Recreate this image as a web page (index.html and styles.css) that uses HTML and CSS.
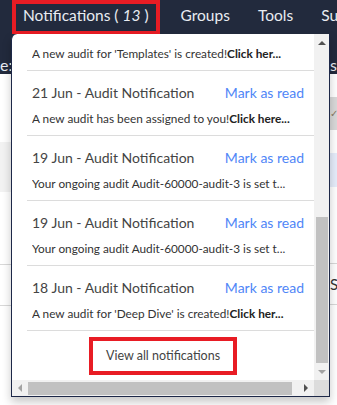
FILE: index.html
```html
<!DOCTYPE html>
<html lang="en">
<head>
    <meta charset="UTF-8">
    <meta name="viewport" content="width=device-width, initial-scale=1.0">
    <title>Notifications</title>
    <link rel="stylesheet" href="styles.css">
</head>
<body>
    <header class="topbar">
        <nav class="nav-main">
            <a class="nav-item is-active" href="#">Notifications ( <i>13</i> )</a>
            <a class="nav-item" href="#">Groups</a>
            <a class="nav-item" href="#">Tools</a>
            <a class="nav-item" href="#">Support</a>
        </nav>
        <div class="nav-sub">
            <span>e:</span>
            <span>s</span>
        </div>
    </header>

    <main class="page">
        <section class="page-left">
            <div class="band"></div>
            <div class="line-row"></div>
        </section>
        <section class="page-right">
            <div class="table-head"><span class="sort-mark">&#10003;</span></div>
            <div class="table-sel"></div>
            <div class="line-row">S</div>
        </section>
    </main>

    <div class="notif-dropdown">
        <div class="notif-body">
            <ul class="notif-list">
                <li class="notif-item">
                    <div class="notif-head">
                        <span class="notif-title">22 Jun - Audit Notification</span>
                        <a class="notif-mark" href="#">Mark as read</a>
                    </div>
                    <div class="notif-text">A new audit for 'Templates' is created!<b>Click her...</b></div>
                </li>
                <li class="notif-item">
                    <div class="notif-head">
                        <span class="notif-title">21 Jun - Audit Notification</span>
                        <a class="notif-mark" href="#">Mark as read</a>
                    </div>
                    <div class="notif-text">A new audit has been assigned to you!<b>Click here...</b></div>
                </li>
                <li class="notif-item">
                    <div class="notif-head">
                        <span class="notif-title">19 Jun - Audit Notification</span>
                        <a class="notif-mark" href="#">Mark as read</a>
                    </div>
                    <div class="notif-text">Your ongoing audit Audit-60000-audit-3 is set t...</div>
                </li>
                <li class="notif-item">
                    <div class="notif-head">
                        <span class="notif-title">19 Jun - Audit Notification</span>
                        <a class="notif-mark" href="#">Mark as read</a>
                    </div>
                    <div class="notif-text">Your ongoing audit Audit-60000-audit-3 is set t...</div>
                </li>
                <li class="notif-item">
                    <div class="notif-head">
                        <span class="notif-title">18 Jun - Audit Notification</span>
                        <a class="notif-mark" href="#">Mark as read</a>
                    </div>
                    <div class="notif-text">A new audit for 'Deep Dive' is created!<b>Click her...</b></div>
                </li>
            </ul>
            <div class="notif-footer">
                <a class="view-all" href="#">View all notifications</a>
            </div>
        </div>

        <!-- fake scrollbars -->
        <div class="vscroll">
            <div class="sb-btn"><span class="arrow-up"></span></div>
            <div class="vtrack"><div class="vthumb"></div></div>
            <div class="sb-btn"><span class="arrow-down"></span></div>
        </div>
        <div class="hscroll">
            <div class="sb-btn"><span class="arrow-left"></span></div>
            <div class="htrack"><div class="hthumb"></div></div>
            <div class="sb-btn"><span class="arrow-right"></span></div>
        </div>
        <div class="sb-corner"></div>
    </div>
</body>
</html>
```

FILE: styles.css
```css
body {
    margin: 0;
    font-family: Lato, "Open Sans", sans-serif;
    background-color: #fff;
    width: 337px;
    height: 405px;
    overflow: hidden;
    position: relative;
}
.topbar {
    background-color: #222a3d;
    color: #e9ecf2;
}
.nav-main {
    display: flex;
    height: 34px;
    padding-left: 11px;
    white-space: nowrap;
    overflow: hidden;
}
.nav-item {
    padding: 0 14px;
    font-size: 15.5px;
    line-height: 31px;
    color: #e9ecf2;
    text-decoration: none;
}
.nav-item.is-active {
    border: 4px solid #e81c24;
    box-sizing: border-box;
    height: 35px;
    line-height: 23px;
    padding: 0 7px;
    margin: 0 7px 0 1px;
}
.nav-sub {
    display: flex;
    justify-content: space-between;
    height: 40px;
    box-sizing: border-box;
    padding-top: 22px;
    font-size: 16px;
    line-height: 18px;
}

/* page behind the menu */
.page {
    display: grid;
    grid-template-columns: 320px 1fr;
}
.page-left .band {
    margin-top: 68px;
    height: 50px;
    background-color: #f2f2f2;
}
.line-row {
    margin-top: 72px;
    height: 40px;
    border-top: 1px solid #d8d8d8;
    border-bottom: 1px solid #d8d8d8;
}
.table-head {
    margin-top: 23px;
    height: 33px;
    background-color: #d9d9d9;
    padding-left: 10px;
}
.sort-mark {
    font-size: 10px;
    color: #8a7a66;
    line-height: 33px;
}
.table-sel {
    margin-top: 23px;
    height: 34px;
    background-color: #e6edfb;
}
.page-right .line-row {
    margin-top: 76px;
    padding-left: 10px;
    font-size: 15px;
    line-height: 40px;
    color: #333;
}

/* notifications dropdown */
.notif-dropdown {
    position: absolute;
    left: 11px;
    top: 34px;
    width: 319px;
    height: 363px;
    box-sizing: border-box;
    background-color: #fff;
    border: 1px solid #1d2848;
    border-top: none;
    border-top-left-radius: 6px;
    box-shadow: 0 5px 10px rgba(0, 0, 0, 0.22);
    display: grid;
    grid-template-columns: 1fr 15px;
    grid-template-rows: 1fr 16px;
    overflow: hidden;
}
.notif-body {
    overflow: hidden;
}
.notif-list {
    list-style: none;
    margin: -28px 0 0 15px;
    padding: 0;
}
.notif-item {
    padding: 12px 10px 7px 5px;
    border-bottom: 1px solid #dcdcdc;
}
.notif-head {
    display: flex;
    justify-content: space-between;
    line-height: 20px;
    height: 20px;
}
.notif-title {
    font-size: 14px;
    color: #444;
}
.notif-mark {
    font-size: 14px;
    color: #4f86f7;
    text-decoration: none;
}
.notif-text {
    margin-top: 7px;
    font-size: 11.8px;
    line-height: 18px;
    color: #333;
    white-space: nowrap;
    overflow: hidden;
}
.notif-text b {
    color: #222;
}
.notif-footer {
    padding-top: 6px;
    text-align: center;
}
.view-all {
    display: inline-block;
    border: 4px solid #e81c24;
    padding: 0 13px;
    line-height: 30px;
    font-size: 12.5px;
    color: #444;
    text-decoration: none;
}

/* scrollbars */
.vscroll {
    background-color: #f1f1f1;
    display: flex;
    flex-direction: column;
}
.hscroll {
    background-color: #f1f1f1;
    display: flex;
}
.sb-corner {
    background-color: #dcdcdc;
}
.sb-btn {
    flex: 0 0 17px;
    display: flex;
    align-items: center;
    justify-content: center;
}
.hscroll .sb-btn {
    flex-basis: 16px;
}
.vtrack {
    flex: 1;
    display: flex;
    flex-direction: column;
    justify-content: flex-end;
    align-items: center;
}
.vthumb {
    width: 12px;
    height: 146px;
    background-color: #c1c1c1;
}
.htrack {
    flex: 1;
    display: flex;
    align-items: center;
}
.hthumb {
    width: 264px;
    height: 13px;
    background-color: #c1c1c1;
}
.arrow-up,
.arrow-down,
.arrow-left,
.arrow-right {
    width: 0;
    height: 0;
    border: 4px solid transparent;
}
.arrow-up {
    border-bottom-color: #505050;
    margin-top: -4px;
}
.arrow-down {
    border-top-color: #a3a3a3;
    margin-bottom: -4px;
}
.arrow-left {
    border-right-color: #a3a3a3;
    margin-left: -4px;
}
.arrow-right {
    border-left-color: #505050;
    margin-right: -4px;
}
```
